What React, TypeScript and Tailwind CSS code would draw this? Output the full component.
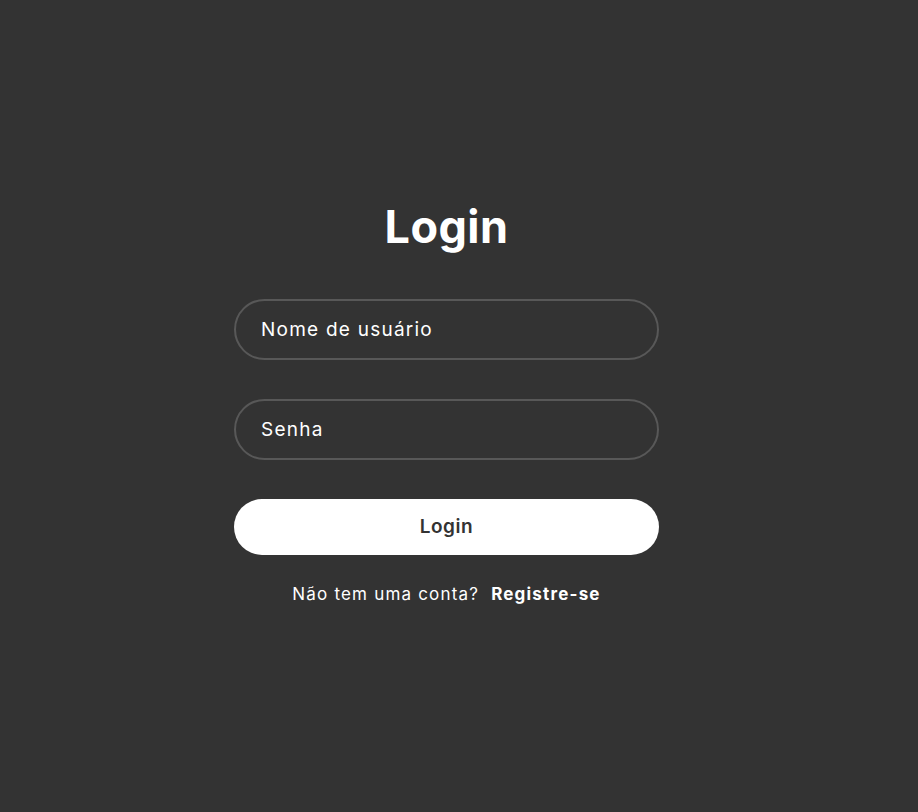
import React, { useState } from 'react';

export default function App() {
  const [username, setUsername] = useState('');
  const [password, setPassword] = useState('');

  const handleSubmit = (e: React.FormEvent) => {
    e.preventDefault();
  };

  return (
    <div
      className="min-h-screen w-full bg-[#333333] flex items-center justify-center pr-[25px] text-white"
      style={{ fontFamily: 'Inter, "Noto Sans", sans-serif' }}
    >
      <form onSubmit={handleSubmit} className="w-[425px] flex flex-col items-center">
        <h1 className="text-[45px] font-bold leading-none tracking-[0.01em] mb-[50px]">Login</h1>

        <input
          type="text"
          value={username}
          onChange={(e) => setUsername(e.target.value)}
          placeholder="Nome de usuário"
          className="w-full h-[61px] rounded-full border-2 border-[#585858] bg-transparent px-[25px] text-[19px] tracking-[0.065em] text-white placeholder-white outline-none"
        />

        <input
          type="password"
          value={password}
          onChange={(e) => setPassword(e.target.value)}
          placeholder="Senha"
          className="w-full h-[61px] mt-[39px] rounded-full border-2 border-[#585858] bg-transparent px-[25px] text-[19px] tracking-[0.065em] text-white placeholder-white outline-none"
        />

        <button
          type="submit"
          className="w-full h-[56px] mt-[39px] rounded-full bg-white text-[#333333] text-[19px] font-semibold tracking-[0.03em]"
        >
          Login
        </button>

        <p className="mt-[27px] text-[17px] tracking-[0.07em]">
          Não tem uma conta?
          <a href="#" className="ml-3 font-bold">Registre-se</a>
        </p>
      </form>
    </div>
  );
}
